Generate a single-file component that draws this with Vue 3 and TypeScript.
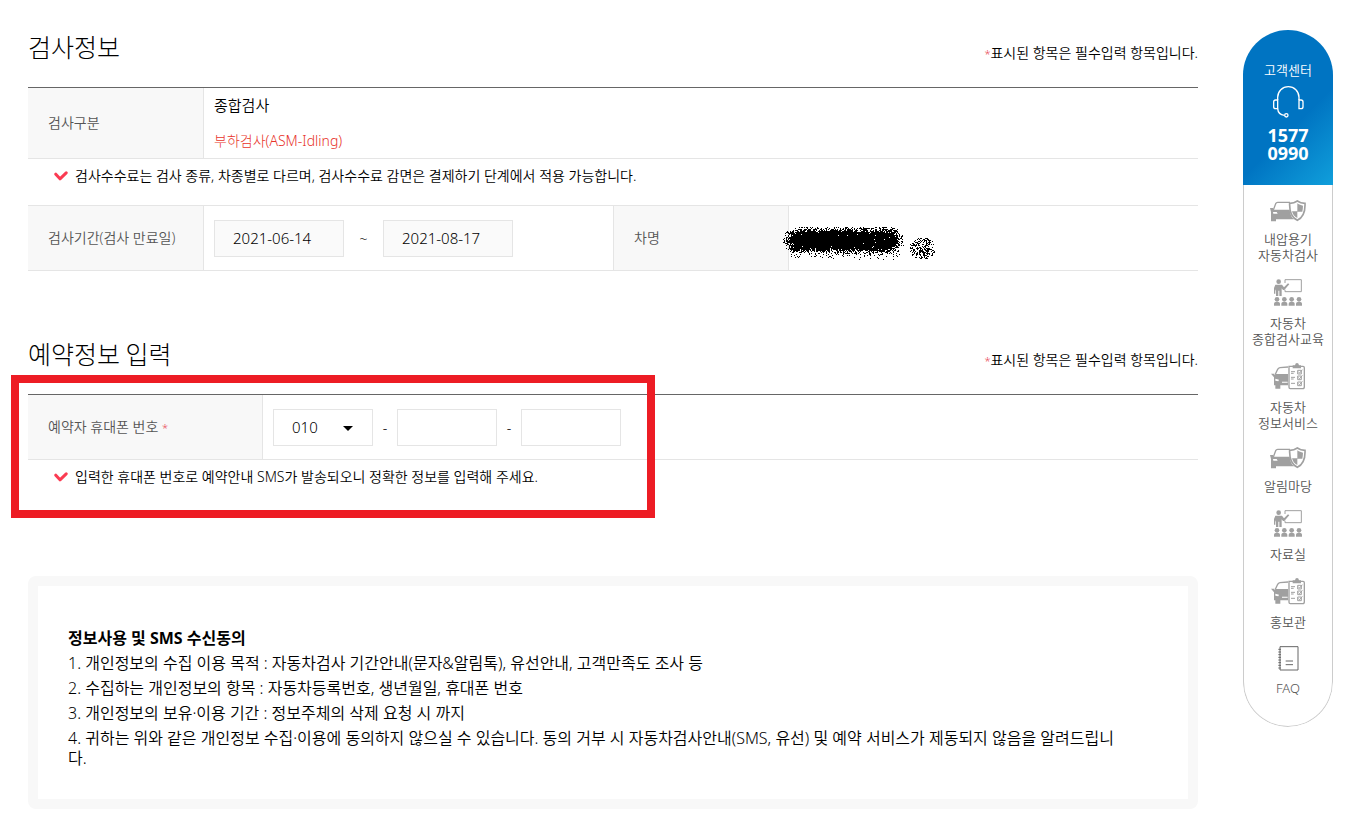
<script setup lang="ts">
import { ref } from 'vue'

type IconName = 'shield' | 'class' | 'checklist' | 'note'

interface QuickLink {
  icon: IconName
  lines: string[]
}

const quickLinks: QuickLink[] = [
  { icon: 'shield', lines: ['내압용기', '자동차검사'] },
  { icon: 'class', lines: ['자동차', '종합검사교육'] },
  { icon: 'checklist', lines: ['자동차', '정보서비스'] },
  { icon: 'shield', lines: ['알림마당'] },
  { icon: 'class', lines: ['자료실'] },
  { icon: 'checklist', lines: ['홍보관'] },
  { icon: 'note', lines: ['FAQ'] },
]

const terms: string[] = [
  '1. 개인정보의 수집 이용 목적 : 자동차검사 기간안내(문자&알림톡), 유선안내, 고객만족도 조사 등',
  '2. 수집하는 개인정보의 항목 : 자동차등록번호, 생년월일, 휴대폰 번호',
  '3. 개인정보의 보유·이용 기간 : 정보주체의 삭제 요청 시 까지',
  '4. 귀하는 위와 같은 개인정보 수집·이용에 동의하지 않으실 수 있습니다. 동의 거부 시 자동차검사안내(SMS, 유선) 및 예약 서비스가 제동되지 않음을 알려드립니다.',
]

const startDate = ref('2021-06-14')
const endDate = ref('2021-08-17')
const phonePrefix = ref('010')
const phoneMiddle = ref('')
const phoneLast = ref('')

// Spray-can strokes that cover the car name
let seed = 20210614
function random(): number {
  seed = (seed * 1664525 + 1013904223) % 4294967296
  return seed / 4294967296
}

function sprayPath(): string {
  let d = ''
  for (let y = 0; y < 36; y++) {
    for (let x = 0; x < 124; x++) {
      const nx = Math.max(18 - x, 0, x - 104)
      const edge = Math.hypot(nx * 0.8, y - 14)
      let chance = edge < 8 ? 0.985 : Math.max(0, 0.95 - (edge - 8) * 0.14)
      if (y > 23 && x > 8 && x < 118) chance = Math.max(chance, 0.32 - (y - 23) * 0.03)
      if (y < 1) chance = 0
      if (random() < chance) d += `M${x} ${y}h1v1h-1z`
    }
  }
  for (let y = 10; y < 34; y++) {
    for (let x = 125; x < 155; x++) {
      const r = Math.hypot((x - 140) / 13, (y - 22) / 11)
      if (r < 1 && random() < 0.42) d += `M${x} ${y}h1v1h-1z`
    }
  }
  return d
}
const spray = sprayPath()
</script>

<template>
  <div class="page">
    <main class="content">
      <section class="section">
        <header class="section-head">
          <h2>검사정보</h2>
          <p class="required"><span class="star">*</span>표시된 항목은 필수입력 항목입니다.</p>
        </header>
        <table class="form-table">
          <colgroup>
            <col class="col-label" />
            <col />
            <col class="col-label" />
            <col />
          </colgroup>
          <tbody>
            <tr>
              <th scope="row">검사구분</th>
              <td colspan="3" class="kind">
                <p class="kind-name">종합검사</p>
                <p class="kind-sub">부하검사(ASM-Idling)</p>
              </td>
            </tr>
            <tr>
              <td colspan="4" class="note lined">
                <p>
                  <svg class="check" viewBox="0 0 14 10" aria-hidden="true"><path d="M1.8 3.2 6 7.8 12.2 1.8" /></svg>
                  검사수수료는 검사 종류, 차종별로 다르며, 검사수수료 감면은 결제하기 단계에서 적용 가능합니다.
                </p>
              </td>
            </tr>
            <tr>
              <th scope="row">검사기간(검사 만료일)</th>
              <td>
                <div class="fields wide">
                  <input v-model="startDate" class="field date" type="text" aria-label="검사기간 시작일" readonly />
                  <span>~</span>
                  <input v-model="endDate" class="field date" type="text" aria-label="검사기간 만료일" readonly />
                </div>
              </td>
              <th scope="row" class="second">차명</th>
              <td class="car">
                <svg class="spray" viewBox="0 0 156 36" shape-rendering="crispEdges" aria-hidden="true"><path :d="spray" /></svg>
              </td>
            </tr>
          </tbody>
        </table>
      </section>

      <section class="section booking">
        <header class="section-head">
          <h2>예약정보 입력</h2>
          <p class="required"><span class="star">*</span>표시된 항목은 필수입력 항목입니다.</p>
        </header>
        <div class="highlight" aria-hidden="true"></div>
        <table class="form-table">
          <colgroup>
            <col class="col-phone" />
            <col />
          </colgroup>
          <tbody>
            <tr>
              <th scope="row"><label for="phone-prefix">예약자 휴대폰 번호 <span class="star">*</span></label></th>
              <td>
                <div class="fields">
                  <span class="select-wrap">
                    <select id="phone-prefix" v-model="phonePrefix" class="field phone">
                      <option>010</option>
                      <option>011</option>
                      <option>016</option>
                      <option>019</option>
                    </select>
                    <svg class="caret" viewBox="0 0 10 5" aria-hidden="true"><path d="M0 0h10L5 5z" /></svg>
                  </span>
                  <span>-</span>
                  <input v-model="phoneMiddle" class="field phone" type="text" aria-label="휴대폰 번호 가운데 자리" />
                  <span>-</span>
                  <input v-model="phoneLast" class="field phone" type="text" aria-label="휴대폰 번호 끝 자리" />
                </div>
              </td>
            </tr>
            <tr>
              <td colspan="2" class="note">
                <p>
                  <svg class="check" viewBox="0 0 14 10" aria-hidden="true"><path d="M1.8 3.2 6 7.8 12.2 1.8" /></svg>
                  입력한 휴대폰 번호로 예약안내 SMS가 발송되오니 정확한 정보를 입력해 주세요.
                </p>
              </td>
            </tr>
          </tbody>
        </table>
      </section>

      <section class="terms">
        <h3>정보사용 및 SMS 수신동의</h3>
        <p v-for="term in terms" :key="term">{{ term }}</p>
      </section>
    </main>

    <aside class="quick">
      <div class="center">
        <p class="center-title">고객센터</p>
        <svg class="headset" viewBox="0 0 96 96" aria-hidden="true">
          <path d="M17 42V34a32 32 0 0 1 64 0v8" />
          <path d="M17 42H11a6 6 0 0 0-6 6v14a6 6 0 0 0 6 6h6zM81 42h6a6 6 0 0 1 6 6v14a6 6 0 0 1-6 6h-6z" />
          <path d="M17 68c1 12 8 19 20 20" />
          <circle cx="43" cy="88" r="5" />
        </svg>
        <strong>1577<br />0990</strong>
      </div>
      <nav class="links" aria-label="빠른 메뉴">
        <a v-for="(link, i) in quickLinks" :key="i" href="#" class="link">
          <span class="icon">
            <svg v-if="link.icon === 'shield'" width="36" height="22" viewBox="0 0 108 66" aria-hidden="true">
              <path class="line thick" d="M10 30 17 11Q19 7 23 7H60" />
              <path class="solid" d="M0 24h9v5h50c1 13 6 23 13 29H18v6H3V36z" />
              <path class="paper" d="M9 36h11l3 5H10z" />
              <path class="line shield" d="M82 3C75 8 67 10 59 10c-1 23 5 42 23 51 18-9 24-28 23-51-8 0-16-2-23-7z" />
              <path class="solid" d="M82 10c6 4 11 6 17 7 0 6-1 12-2 18H82zM82 34v20C73 50 68 43 66 34z" />
            </svg>
            <svg v-else-if="link.icon === 'class'" width="28" height="27" viewBox="0 0 84 81" aria-hidden="true">
              <circle class="solid" cx="14" cy="8" r="7" />
              <path class="solid" d="M4 17h20l6 8 12-12 4 3-15 17h-4l-4-5v23h-7V35h-3v16H6V31l-2 5v8H0V27z" />
              <path class="line" d="M33 12V2h49v36H33v-6" />
              <g v-for="n in 4" :key="n" :transform="`translate(${(n - 1) * 22} 0)`">
                <circle class="solid" cx="9" cy="61" r="7" />
                <path class="solid" d="M0 80v-5c0-5 3-7 9-7s9 2 9 7v5z" />
              </g>
            </svg>
            <svg v-else-if="link.icon === 'checklist'" width="34" height="27" viewBox="0 0 102 81" aria-hidden="true">
              <path class="line thick" d="M13 34 20 19q2-4 7-5l24-2" />
              <path class="solid" d="M0 32h10v4l3-3h38v34H28v10H13V67H9V43z" />
              <path class="paper" d="M13 47l11 3-2 5-9-2zM33 56h17v3H33z" />
              <path class="line thick paperfill" d="M54 10h42q4 0 4 4v57q0 6-5 6H58q-4 0-4-4z" />
              <path class="solid" d="M65 7h7q1-7 6-7t6 7h6v9H65z" />
              <path class="line" d="M60 26h12M60 43h12M60 61h12M60 31h8M60 48h8" />
              <path class="line" d="M80 22h11v11H80zM80 39h11v11H80zM80 57h11v11H80zM82 27l4 3 8-10M82 44l4 3 8-10M82 62l4 3 8-10" />
            </svg>
            <svg v-else width="21" height="25" viewBox="0 0 63 75" aria-hidden="true">
              <path class="dark" d="M6 2h54v70H6z" />
              <path class="dark" d="M1 10h8M1 18h8M1 26h8M1 34h8M1 42h8M1 50h8M1 58h8M1 66h8" />
              <path class="dark" d="M23 45h22M23 56h22" />
            </svg>
          </span>
          <span v-for="line in link.lines" :key="line" class="link-line">{{ line }}</span>
        </a>
      </nav>
    </aside>
  </div>
</template>

<style>
body {
  background: #fff;
}
</style>

<style scoped>
.page {
  display: flex;
  align-items: flex-start;
  gap: 45px;
  padding: 0 18px 12px 28px;
  font-family: "Noto Sans", "Noto Sans CJK KR", sans-serif;
  font-size: 14px;
  font-weight: 350;
  line-height: 20px;
  color: #000;
}
.page *,
.page *::before {
  box-sizing: border-box;
}
h2,
h3,
p {
  margin: 0;
}
.content {
  flex: 1;
  min-width: 0;
}
.section {
  padding-top: 28px;
}
.booking {
  position: relative;
  padding-top: 64px;
}
.section-head {
  display: flex;
  justify-content: space-between;
  align-items: flex-end;
  margin-bottom: 23px;
}
h2 {
  font-family: "Noto Sans CJK KR", sans-serif;
  font-size: 25px;
  line-height: 36px;
  font-weight: 300;
}
.star {
  color: #e8414d;
  font-size: 11px;
  font-weight: 300;
}
.form-table {
  width: 100%;
  table-layout: fixed;
  border-collapse: separate;
  border-spacing: 0;
  border-top: 1px solid #666;
}
.col-label {
  width: 176px;
}
.col-phone {
  width: 235px;
}
th,
td {
  padding: 7px 10px;
  border-bottom: 1px solid #e5e5e5;
  text-align: left;
}
th {
  padding-left: 20px;
  border-right: 1px solid #e5e5e5;
  background: #f8f8f8;
  color: #555;
  font-weight: 350;
}
th.second {
  border-left: 1px solid #e5e5e5;
}
.kind-name {
  margin-bottom: 16px;
  font-size: 15px;
}
.kind-sub {
  color: #e8352b;
  font-weight: 300;
}
.note {
  height: 46px;
  padding: 7px 26px 19px;
  border-bottom: 0;
}
.note.lined {
  height: 47px;
  border-bottom: 1px solid #e5e5e5;
}
.note p {
  display: flex;
  align-items: center;
  gap: 7px;
}
.check {
  flex: none;
  width: 14px;
  height: 10px;
  fill: none;
  stroke: #fb3b52;
  stroke-width: 3;
  stroke-linecap: round;
  stroke-linejoin: round;
}
.fields {
  display: flex;
  align-items: center;
  padding: 7px 0 6px;
}
.fields > span:not(.select-wrap) {
  width: 24px;
  text-align: center;
}
.fields.wide > span {
  width: 39px;
}
.field {
  height: 37px;
  padding: 0 18px 2px;
  border: 1px solid #e5e5e5;
  border-radius: 0;
  background: #fff;
  color: #000;
  font-family: inherit;
  font-size: 15px;
  font-weight: 350;
  outline: 0;
}
.date {
  width: 130px;
  background: #fafafa;
}
.phone {
  width: 100px;
}
.select-wrap {
  position: relative;
  display: flex;
}
select.field {
  appearance: none;
}
.caret {
  position: absolute;
  right: 20px;
  top: 17px;
  width: 10px;
  height: 5px;
  pointer-events: none;
}
.car {
  position: relative;
}
.spray {
  position: absolute;
  left: -7px;
  top: 20px;
  width: 156px;
  height: 36px;
}
.highlight {
  position: absolute;
  top: 104px;
  left: -17px;
  width: 644px;
  height: 143px;
  border: 8px solid #ed1c24;
  pointer-events: none;
}
.terms {
  margin-top: 70px;
  padding: 42px 56px 31px 30px;
  border: 10px solid #f8f8f8;
  border-radius: 8px;
  font-size: 16px;
  word-break: break-all;
}
.terms h3 {
  font-size: 16px;
  line-height: 20px;
  font-weight: 700;
}
.terms p {
  margin-top: 5px;
}
.quick {
  flex: none;
  width: 90px;
  margin-top: 30px;
  border-radius: 45px;
  overflow: hidden;
  font-size: 13px;
  text-align: center;
}
.center {
  display: flex;
  flex-direction: column;
  align-items: center;
  height: 155px;
  padding-top: 30px;
  background: linear-gradient(135deg, #0074c2 60%, #109fdb);
  color: #fff;
}
.headset {
  width: 32px;
  height: 32px;
  margin: 6px 0 8px;
  fill: none;
  stroke: #fff;
  stroke-width: 4;
}
.center strong {
  font-size: 18px;
  line-height: 18px;
}
.links {
  display: flex;
  flex-direction: column;
  gap: 16px;
  padding: 15px 0 30px;
  border: 1px solid #ccc;
  border-top: 0;
  border-radius: 0 0 45px 45px;
}
.link {
  display: flex;
  flex-direction: column;
  align-items: center;
  color: #555;
  text-decoration: none;
}
.icon {
  display: flex;
  margin-bottom: 9px;
}
.link-line {
  line-height: 16px;
  white-space: nowrap;
}
.solid {
  fill: #a0a0a0;
}
.paper {
  fill: #fff;
}
.line {
  fill: none;
  stroke: #a0a0a0;
  stroke-width: 3;
}
.thick {
  stroke-width: 4;
}
.shield {
  stroke-width: 5;
}
.paperfill {
  fill: #fff;
}
.dark {
  fill: none;
  stroke: #666;
  stroke-width: 3;
}
</style>
